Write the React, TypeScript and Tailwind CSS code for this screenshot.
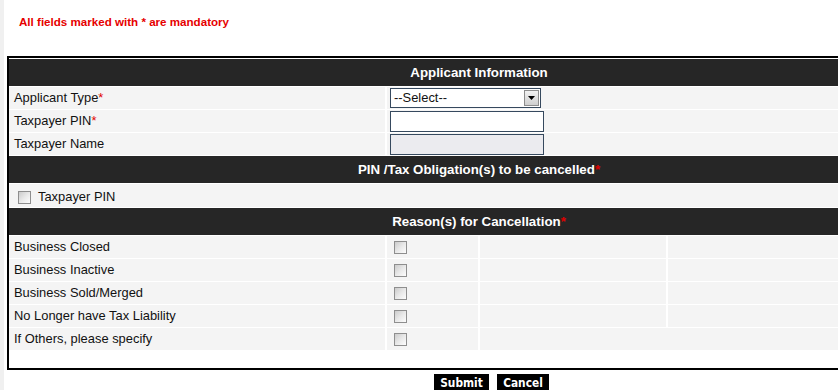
import React from "react";

const font = "font-['Liberation_Sans',Arial,sans-serif]";

function Req() {
  return <span className="text-[#e00000]">*</span>;
}

function Check() {
  return (
    <span className="block w-[13px] h-[13px] border border-[#8e8e8e] bg-linear-to-br from-[#cbcbcb] via-[#e8e8e8] to-[#fdfdfd]" />
  );
}

function Header({ children }: { children: React.ReactNode }) {
  return (
    <div className="h-[27px] bg-[#262626] flex items-center justify-center text-white font-bold text-[13.3px] leading-none">
      {children}
    </div>
  );
}

function Row({ label, children }: { label: React.ReactNode; children?: React.ReactNode }) {
  return (
    <div className="flex gap-[2px] h-[22px]">
      <div className="w-[376px] bg-[#f4f4f4] flex items-center pl-[5px] text-[12.9px] leading-none text-[#111]">
        {label}
      </div>
      <div className="flex-1 bg-[#f4f4f4] flex items-center pl-[3px]">{children}</div>
    </div>
  );
}

const reasons = [
  "Business Closed",
  "Business Inactive",
  "Business Sold/Merged",
  "No Longer have Tax Liability",
  "If Others, please specify",
];

export default function App() {
  return (
    <div className={`${font} w-[838px] h-[390px] overflow-hidden bg-white flex`}>
      <div className="w-[4px] shrink-0 bg-[#f0f0f0]" />
      <div className="flex-1 min-w-0">
        <p className="pt-[15px] pl-[15px] text-[11.6px] leading-[14px] font-bold text-[#e60000]">
          All fields marked with * are mandatory
        </p>

        <div className="mt-[27px] ml-[3px] w-[944px] border-2 border-black pt-[1px] pb-[18px] bg-white">
          <div className="flex flex-col gap-[1px]">
            <Header>Applicant Information</Header>
            <Row
              label={
                <>
                  Applicant Type
                  <Req />
                </>
              }
            >
              <div className="w-[151px] h-[20px] border border-[#36495e] bg-white flex items-center justify-between">
                <span className="pl-[3px] text-[12.9px] leading-none text-[#111]">--Select--</span>
                <span className="w-[15px] h-[16px] mr-[1px] border border-[#8d8d8d] bg-linear-to-b from-[#f2f2f2] to-[#cfcfcf] flex items-center justify-center">
                  <svg width="7" height="4" viewBox="0 0 7 4">
                    <path d="M0 0h7L3.5 4z" fill="#000" />
                  </svg>
                </span>
              </div>
            </Row>
            <Row
              label={
                <>
                  Taxpayer PIN
                  <Req />
                </>
              }
            >
              <div className="w-[154px] h-[21px] border border-[#36495e] bg-white" />
            </Row>
            <Row label="Taxpayer Name">
              <div className="w-[154px] h-[21px] border border-[#36495e] bg-[#ebebef]" />
            </Row>

            <Header>
              PIN /Tax Obligation(s) to be cancelled
              <Req />
            </Header>
            <div className="h-[23px] bg-[#f4f4f4] flex items-center gap-[7px] pl-[9px] pt-[4px] text-[12.9px] leading-none text-[#111]">
              <Check />
              Taxpayer PIN
            </div>

            <Header>
              Reason(s) for Cancellation
              <Req />
            </Header>
            {reasons.map((r, i) => (
              <div key={r} className="flex gap-[2px] h-[22px]">
                <div className="w-[376px] bg-[#f4f4f4] flex items-center pl-[5px] pt-[1px] text-[12.9px] leading-none text-[#111]">
                  {r}
                </div>
                <div className="w-[91px] bg-[#f4f4f4] flex items-center pl-[7px]">
                  <Check />
                </div>
                {i < reasons.length - 1 ? (
                  <>
                    <div className="w-[186px] bg-[#f4f4f4]" />
                    <div className="flex-1 bg-[#f4f4f4]" />
                  </>
                ) : (
                  <div className="flex-1 bg-[#f4f4f4]" />
                )}
              </div>
            ))}
          </div>
        </div>

        <div className="flex gap-[8px] pl-[430px] mt-[4px] font-['DejaVu_Sans_Condensed','DejaVu_Sans',sans-serif] font-bold text-[11.8px]">
          <button className="h-[20px] w-[55px] bg-black text-white leading-none">Submit</button>
          <button className="h-[20px] w-[52px] bg-black text-white leading-none">Cancel</button>
        </div>
      </div>
    </div>
  );
}
